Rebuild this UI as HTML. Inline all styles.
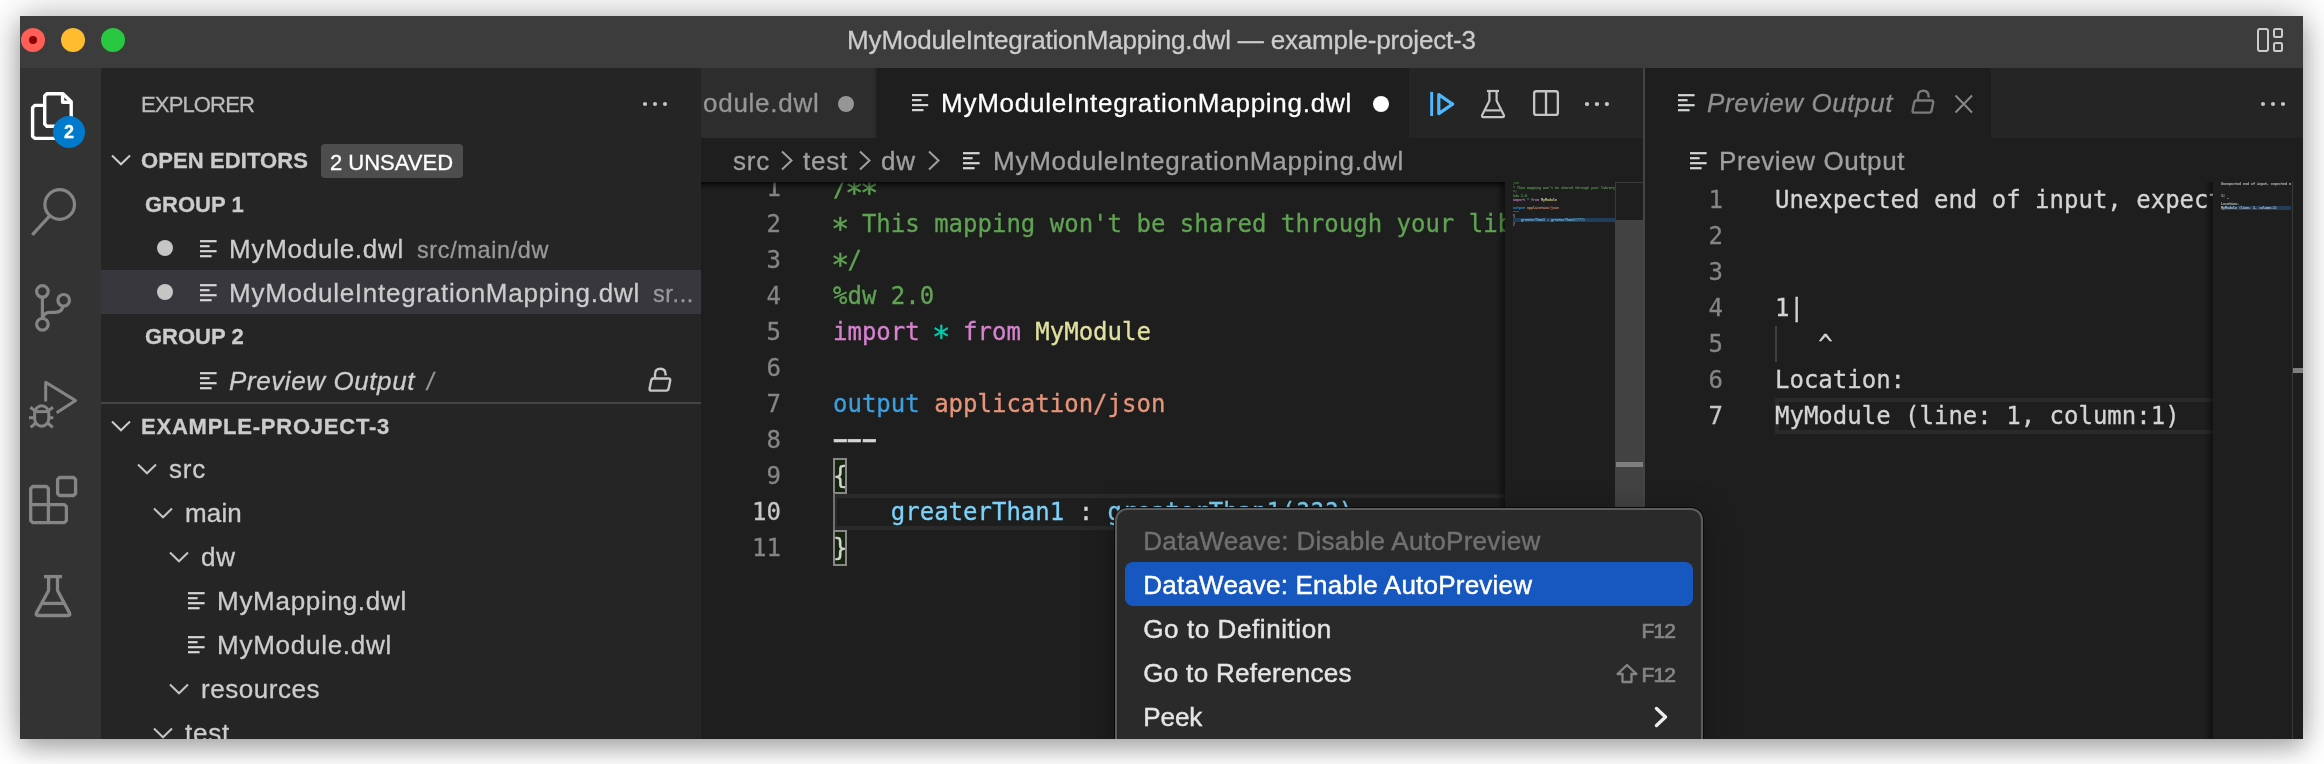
<!DOCTYPE html>
<html><head><meta charset="utf-8"><title>MyModuleIntegrationMapping.dwl — example-project-3</title>
<style>
html,body{margin:0;padding:0;background:#fff;}
body{width:2324px;height:764px;position:relative;overflow:hidden;font-family:"Liberation Sans",sans-serif;font-size:26px;color:#ccc;-webkit-text-stroke:0.3px;}
#shadow{position:absolute;left:20px;top:16px;width:2283px;height:723px;background:#222;box-shadow:0 0 36px rgba(0,0,0,.3),0 10px 20px rgba(0,0,0,.2);}
#w{will-change:transform;position:absolute;left:0;top:0;width:2324px;height:764px;clip-path:inset(16px 21px 25px 20px);}
#w div,#w span,#w svg{position:absolute;white-space:pre;}
.r{height:44px;line-height:44px;}
.b{font-weight:700;font-size:22px;}
.mono{font-family:"DejaVu Sans Mono","Liberation Mono",monospace;font-size:24px;}
.ln{height:36px;line-height:36px;}
.num{text-align:right;color:#858585;}
svg{overflow:visible;}
#w .mi{-webkit-text-stroke:0.45px currentColor;}
#w .da{position:relative;display:inline-block;transform:translateY(-1.5px) scale(2.05,1.45);}
#w .as{position:relative;display:inline-block;transform:translateY(4.5px) scale(1.28);}
</style></head><body>
<div id="shadow"></div>
<div id="w">
<!--TITLEBAR-->
<div style="left:20px;top:16px;width:2283px;height:52px;background:#3c3c3c"></div>
<div style="left:21px;top:28px;width:24px;height:24px;border-radius:50%;background:#ff5f57"></div>
<div style="left:29px;top:36px;width:8px;height:8px;border-radius:50%;background:#8c0000"></div>
<div style="left:61px;top:28px;width:24px;height:24px;border-radius:50%;background:#febc2e"></div>
<div style="left:101px;top:28px;width:24px;height:24px;border-radius:50%;background:#28c840"></div>
<div id="title" style="left:20px;top:16px;width:2283px;height:52px;line-height:49px;text-align:center;color:#ccc;letter-spacing:-0.17px">MyModuleIntegrationMapping.dwl — example-project-3</div>
<svg style="left:2256px;top:27px" width="28" height="26" viewBox="0 0 28 26" fill="none" stroke="#ccc" stroke-width="2"><rect x="2" y="2" width="10" height="22" rx="2"/><rect x="18" y="2" width="8" height="8" rx="1.5"/><rect x="18" y="16" width="8" height="8" rx="1.5"/></svg>
<!--ACTIVITY-->
<div style="left:20px;top:68px;width:81px;height:671px;background:#333"></div>
<svg style="left:20px;top:68px" width="81" height="671" viewBox="20 68 81 671" fill="none" stroke="#858585" stroke-width="3" stroke-linejoin="round" stroke-linecap="butt">
<g stroke="#fff" stroke-width="3.4">
<path d="M44.7 105.4 H34.8 L32.6 107.6 V136.2 L34.8 138.4 H56"/>
<path d="M46.9 93.8 H63 L71.2 101.8 V124.2 L69 126.3 H46.9 L44.7 124.1 V96 Z"/>
<path d="M62.6 94 V102.3 H71"/>
</g>
<circle cx="59.7" cy="204.5" r="14.8" stroke-width="3.2"/><path d="M49.7 215.8 L32.3 234.8" stroke-width="3.2"/>
<g stroke-width="3.2">
<circle cx="42.4" cy="291.4" r="5.8"/><circle cx="63.7" cy="300.3" r="5.8"/><circle cx="42.4" cy="324.3" r="5.8"/>
<path d="M42.4 297.2 V318.5"/><path d="M62.8 306 Q62.2 312.3 55 312.3 H50 Q43.6 312.3 42.6 318.5"/>
</g>
<g stroke-width="3">
<path d="M45.7 401.5 V382.3 L75.6 400.6 L56.6 412.8"/>
<rect x="34.6" y="405.8" width="14.2" height="20.4" rx="7.1" ry="7.6"/>
<path d="M34.6 411.6 H48.8"/>
<path d="M35.2 411 L30.4 407.3 M48.2 411 L53 407.3 M34.6 417.8 H29 M48.8 417.8 H53.3 M35.8 423 L30.6 427.4 M47.6 423 L52.8 427.4"/>
</g>
<g stroke-width="3.3">
<path d="M48.4 504.6 V488.5 L46.4 486.5 H32.7 L30.7 488.5 V520.6 L32.7 522.6 H64.4 L66.4 520.6 V506.6 L64.4 504.6 Z"/>
<path d="M30.7 504.6 H48.4 V522.6"/>
<path d="M59.6 477.5 H73.6 L75.6 479.5 V493.5 L73.6 495.5 H59.6 L57.6 493.5 V479.5 Z"/>
</g>
<g stroke-width="3.3">
<path d="M44 576.6 H62"/>
<path d="M48.6 577 V590.5 L36.5 612.9 Q35.3 615.5 38.1 615.5 H67.9 Q70.7 615.5 69.5 612.9 L57.5 590.5 V577"/>
<path d="M42 603.4 H64"/>
</g>
</svg>
<div style="left:53px;top:116px;width:32px;height:32px;border-radius:50%;background:#007acc"></div>
<div style="left:53px;top:116px;width:32px;height:32px;line-height:33px;text-align:center;color:#fff;font-size:18px;font-weight:700">2</div>
<!--SIDEBAR-->
<div style="left:101px;top:68px;width:600px;height:671px;background:#252526"></div>
<div class="r" style="left:141px;top:83px;font-size:22px;color:#bbb;letter-spacing:-0.85px">EXPLORER</div>
<svg style="left:641px;top:100px" width="28" height="8" viewBox="0 0 28 8" fill="#c5c5c5"><circle cx="4" cy="4" r="2.1"/><circle cx="14" cy="4" r="2.1"/><circle cx="24" cy="4" r="2.1"/></svg>
<svg style="left:111px;top:154px" width="20" height="12" viewBox="0 0 20 12" fill="none" stroke="#ccc" stroke-width="2"><path d="M1 1.5 L10 10.3 L19 1.5"/></svg>
<div class="r b" style="left:141px;top:139px;color:#ccc;letter-spacing:0.1px">OPEN EDITORS</div>
<div style="left:321px;top:144px;width:142px;height:34px;border-radius:4px;background:#4d4d4d"></div>
<div style="left:330px;top:144px;height:36px;line-height:37px;font-size:22px;color:#fff">2 UNSAVED</div>
<div class="r b" style="left:145px;top:183px;color:#ccc">GROUP 1</div>
<div style="left:157px;top:240px;width:16px;height:16px;border-radius:50%;background:#c5c5c5"></div>
<svg style="left:200px;top:240px" width="18" height="18" viewBox="0 0 18 18" fill="#d4d7d6"><rect x="0" y="0.1" width="16.6" height="2.2"/><rect x="0" y="5.1" width="9.6" height="2.2"/><rect x="0" y="10.1" width="16.6" height="2.2"/><rect x="0" y="15.1" width="11.6" height="2.2"/></svg>
<div class="r" style="left:229px;top:227px;letter-spacing:0.74px">MyModule.dwl</div>
<div class="r" style="left:417px;top:228px;font-size:23.4px;color:#999;letter-spacing:0.66px">src/main/dw</div>
<div style="left:101px;top:270px;width:600px;height:44px;background:#37373d"></div>
<div style="left:157px;top:284px;width:16px;height:16px;border-radius:50%;background:#c5c5c5"></div>
<svg style="left:200px;top:284px" width="18" height="18" viewBox="0 0 18 18" fill="#d4d7d6"><rect x="0" y="0.1" width="16.6" height="2.2"/><rect x="0" y="5.1" width="9.6" height="2.2"/><rect x="0" y="10.1" width="16.6" height="2.2"/><rect x="0" y="15.1" width="11.6" height="2.2"/></svg>
<div class="r" style="left:229px;top:271px;letter-spacing:0.74px">MyModuleIntegrationMapping.dwl</div>
<div class="r" style="left:653px;top:272px;font-size:23.4px;color:#999;letter-spacing:0.66px">sr...</div>
<div class="r b" style="left:145px;top:315px;color:#ccc">GROUP 2</div>
<svg style="left:200px;top:372px" width="18" height="18" viewBox="0 0 18 18" fill="#d4d7d6"><rect x="0" y="0.1" width="16.6" height="2.2"/><rect x="0" y="5.1" width="9.6" height="2.2"/><rect x="0" y="10.1" width="16.6" height="2.2"/><rect x="0" y="15.1" width="11.6" height="2.2"/></svg>
<div class="r" style="left:229px;top:359px;font-style:italic;letter-spacing:0.59px">Preview Output</div>
<div class="r" style="left:427px;top:360px;font-size:23.4px;color:#999;font-style:italic">/</div>
<svg style="left:648px;top:367px" width="24" height="26" viewBox="0 0 24 26" fill="none" stroke="#c5c5c5" stroke-width="2.4" stroke-linejoin="round"><path d="M3.6 11.5 H20.4 Q22.6 11.5 22.2 13.6 L20.6 21.6 Q20.2 23.6 18.2 23.6 H3.4 Q1.2 23.6 1.6 21.6 L3.2 13.6 Q3.6 11.5 5.6 11.5"/><path d="M7 11.5 V7.5 Q7 1.8 12.4 1.8 Q17.6 1.8 17.6 7.5 V8.6"/></svg>
<div style="left:101px;top:402px;width:600px;height:2px;background:#454546"></div>
<svg style="left:111px;top:420px" width="20" height="12" viewBox="0 0 20 12" fill="none" stroke="#ccc" stroke-width="2"><path d="M1 1.5 L10 10.3 L19 1.5"/></svg>
<div class="r b" style="left:141px;top:404.5px;color:#ccc;letter-spacing:0.77px">EXAMPLE-PROJECT-3</div>
<svg style="left:136.5px;top:463px" width="20" height="12" viewBox="0 0 20 12" fill="none" stroke="#c5c5c5" stroke-width="2"><path d="M1 1.5 L10 10.3 L19 1.5"/></svg>
<div class="r" style="left:169px;top:447px;letter-spacing:0.78px">src</div>
<svg style="left:152.5px;top:507px" width="20" height="12" viewBox="0 0 20 12" fill="none" stroke="#c5c5c5" stroke-width="2"><path d="M1 1.5 L10 10.3 L19 1.5"/></svg>
<div class="r" style="left:185px;top:491px;letter-spacing:0.16px">main</div>
<svg style="left:168.5px;top:551px" width="20" height="12" viewBox="0 0 20 12" fill="none" stroke="#c5c5c5" stroke-width="2"><path d="M1 1.5 L10 10.3 L19 1.5"/></svg>
<div class="r" style="left:201px;top:535px;letter-spacing:0.7px">dw</div>
<svg style="left:188px;top:592px" width="18" height="18" viewBox="0 0 18 18" fill="#d4d7d6"><rect x="0" y="0.1" width="16.6" height="2.2"/><rect x="0" y="5.1" width="9.6" height="2.2"/><rect x="0" y="10.1" width="16.6" height="2.2"/><rect x="0" y="15.1" width="11.6" height="2.2"/></svg>
<div class="r" style="left:217px;top:579px;letter-spacing:0.72px">MyMapping.dwl</div>
<svg style="left:188px;top:636px" width="18" height="18" viewBox="0 0 18 18" fill="#d4d7d6"><rect x="0" y="0.1" width="16.6" height="2.2"/><rect x="0" y="5.1" width="9.6" height="2.2"/><rect x="0" y="10.1" width="16.6" height="2.2"/><rect x="0" y="15.1" width="11.6" height="2.2"/></svg>
<div class="r" style="left:217px;top:623px;letter-spacing:0.74px">MyModule.dwl</div>
<svg style="left:168.5px;top:683px" width="20" height="12" viewBox="0 0 20 12" fill="none" stroke="#c5c5c5" stroke-width="2"><path d="M1 1.5 L10 10.3 L19 1.5"/></svg>
<div class="r" style="left:201px;top:667px;letter-spacing:0.54px">resources</div>
<svg style="left:152.5px;top:727px" width="20" height="12" viewBox="0 0 20 12" fill="none" stroke="#c5c5c5" stroke-width="2"><path d="M1 1.5 L10 10.3 L19 1.5"/></svg>
<div class="r" style="left:185px;top:711px;letter-spacing:0.77px">test</div>
<!--GROUP1-->
<div style="left:701px;top:68px;width:942px;height:70px;background:#252526"></div>
<div style="left:701px;top:68px;width:174px;height:70px;background:#2d2d2d"></div>
<div style="left:703px;top:69px;height:70px;line-height:69px;color:#969696;letter-spacing:0.74px">odule.dwl</div>
<div style="left:838px;top:96px;width:16px;height:16px;border-radius:50%;background:#969696"></div>
<div style="left:877px;top:68px;width:532px;height:70px;background:#1e1e1e"></div>
<svg style="left:912px;top:93.6px" width="18" height="18" viewBox="0 0 18 18" fill="#d4d4d4"><rect x="0" y="0" width="16.2" height="2.2"/><rect x="0" y="5" width="9.5" height="2.2"/><rect x="0" y="10" width="16.2" height="2.2"/><rect x="0" y="15" width="11.5" height="2.2"/></svg>
<div style="left:941px;top:69px;height:70px;line-height:69px;color:#fff;letter-spacing:0.74px">MyModuleIntegrationMapping.dwl</div>
<div style="left:1372.7px;top:96px;width:16px;height:16px;border-radius:50%;background:#fff"></div>
<svg style="left:1428px;top:90px" width="28" height="28" viewBox="0 0 28 28" fill="none" stroke="#4fb8ff" stroke-linejoin="round"><path d="M3.65 1.9 V26" stroke-width="2.9"/><path d="M10.8 4.6 L24.6 14.1 L10.8 23.6 Z" stroke-width="3.2"/></svg>
<svg style="left:1480px;top:89px" width="26" height="30" viewBox="0 0 26 30" fill="none" stroke="#c5c5c5" stroke-width="2.2" stroke-linejoin="round"><path d="M7 2 H19"/><path d="M9.4 2 V11.8 L2.2 25.9 Q1.4 28.1 3.6 28.1 H22.4 Q24.6 28.1 23.8 25.9 L16.6 11.8 V2"/><path d="M5.4 21.4 H20.6"/></svg>
<svg style="left:1532px;top:90px" width="28" height="28" viewBox="0 0 28 28" fill="none" stroke="#c5c5c5" stroke-width="2.3"><rect x="2.15" y="1.25" width="23.7" height="23.7" rx="2.2"/><path d="M14 1.25 V24.95"/></svg>
<svg style="left:1583px;top:100px" width="28" height="8" viewBox="0 0 28 8" fill="#c5c5c5"><circle cx="4" cy="4.1" r="2.15"/><circle cx="13.95" cy="4.1" r="2.15"/><circle cx="23.9" cy="4.1" r="2.15"/></svg>
<div style="left:701px;top:138px;width:942px;height:44px;background:#1e1e1e"></div>
<div class="r" style="left:733px;top:139px;color:#a0a0a0;letter-spacing:0.78px">src</div>
<div class="r" style="left:803px;top:139px;color:#a0a0a0;letter-spacing:0.77px">test</div>
<div class="r" style="left:881px;top:139px;color:#a0a0a0;letter-spacing:0.7px">dw</div>
<svg style="left:780px;top:151px" width="14" height="20" viewBox="0 0 14 20" fill="none" stroke="#a0a0a0" stroke-width="2"><path d="M2 0.5 L11.5 9.5 L2 18.5"/></svg>
<svg style="left:858px;top:151px" width="14" height="20" viewBox="0 0 14 20" fill="none" stroke="#a0a0a0" stroke-width="2"><path d="M2 0.5 L11.5 9.5 L2 18.5"/></svg>
<svg style="left:927px;top:151px" width="14" height="20" viewBox="0 0 14 20" fill="none" stroke="#a0a0a0" stroke-width="2"><path d="M2 0.5 L11.5 9.5 L2 18.5"/></svg>
<svg style="left:963px;top:152px" width="18" height="18" viewBox="0 0 18 18" fill="#d4d7d6"><rect x="0" y="0.1" width="16.6" height="2.2"/><rect x="0" y="5.1" width="9.6" height="2.2"/><rect x="0" y="10.1" width="16.6" height="2.2"/><rect x="0" y="15.1" width="11.6" height="2.2"/></svg>
<div class="r" style="left:993px;top:139px;color:#a0a0a0;letter-spacing:0.74px">MyModuleIntegrationMapping.dwl</div>
<div id="ed1" style="left:701px;top:182px;width:942px;height:557px;background:#1e1e1e;overflow:hidden"></div>
<!--CODE1-->
<div style="left:701px;top:182px;width:804px;height:557px;overflow:hidden">
<div style="left:132px;top:312px;width:680px;height:36px;border:4px solid #2a2a2a;box-sizing:border-box"></div>
<div style="left:132px;top:276px;width:14px;height:35.5px;border:2px solid #888;background:#16240f;box-sizing:border-box"></div>
<div style="left:132px;top:348px;width:14px;height:35.5px;border:2px solid #888;background:#16240f;box-sizing:border-box"></div>
<div style="left:132px;top:311px;width:2px;height:37px;background:#707070"></div>
<div class="mono ln num" style="left:0;width:80px;top:-12px;color:#858585">1</div><div class="mono ln" style="left:132px;top:-12px"><span style="position:static;color:#5fa353">/<span class="as">*</span><span class="as">*</span></span></div>
<div class="mono ln num" style="left:0;width:80px;top:24px;color:#858585">2</div><div class="mono ln" style="left:132px;top:24px"><span style="position:static;color:#5fa353"><span class="as">*</span> This mapping won't be shared through your library</span></div>
<div class="mono ln num" style="left:0;width:80px;top:60px;color:#858585">3</div><div class="mono ln" style="left:132px;top:60px"><span style="position:static;color:#5fa353"><span class="as">*</span>/</span></div>
<div class="mono ln num" style="left:0;width:80px;top:96px;color:#858585">4</div><div class="mono ln" style="left:132px;top:96px"><span style="position:static;color:#5fa353">%dw 2.0</span></div>
<div class="mono ln num" style="left:0;width:80px;top:132px;color:#858585">5</div><div class="mono ln" style="left:132px;top:132px"><span style="position:static;color:#d682ce">import</span><span style="position:static;color:#d4d4d4"> </span><span style="position:static;color:#00d0b0"><span class="as">*</span></span><span style="position:static;color:#d4d4d4"> </span><span style="position:static;color:#d682ce">from</span><span style="position:static;color:#d4d4d4"> </span><span style="position:static;color:#e1e1a0">MyModule</span></div>
<div class="mono ln num" style="left:0;width:80px;top:168px;color:#858585">6</div>
<div class="mono ln num" style="left:0;width:80px;top:204px;color:#858585">7</div><div class="mono ln" style="left:132px;top:204px"><span style="position:static;color:#3c9fe0">output</span><span style="position:static;color:#d4d4d4"> </span><span style="position:static;color:#e6957a">application/json</span></div>
<div class="mono ln num" style="left:0;width:80px;top:240px;color:#858585">8</div><div class="mono ln" style="left:132px;top:240px"><span style="position:static;color:#d4d4d4"><span class="da">-</span><span class="da">-</span><span class="da">-</span></span></div>
<div class="mono ln num" style="left:0;width:80px;top:276px;color:#858585">9</div><div class="mono ln" style="left:132px;top:276px"><span style="position:static;color:#d4d4d4">{</span></div>
<div class="mono ln num" style="left:0;width:80px;top:312px;color:#c6c6c6">10</div><div class="mono ln" style="left:132px;top:312px"><span style="position:static;color:#d4d4d4">    </span><span style="position:static;color:#7cd3fa">greaterThan1</span><span style="position:static;color:#d4d4d4"> : </span><span style="position:static;color:#7cd3fa">greaterThan1(???)</span></div>
<div class="mono ln num" style="left:0;width:80px;top:348px;color:#858585">11</div><div class="mono ln" style="left:132px;top:348px"><span style="position:static;color:#d4d4d4">}</span></div>
</div>
<div style="left:701px;top:182px;width:942px;height:8px;background:linear-gradient(#000 0,rgba(0,0,0,.55) 25%,rgba(0,0,0,0) 100%);opacity:.8"></div>
<div style="left:1505px;top:182px;width:110px;height:557px;background:#1e1e1e"></div>
<div style="left:1497px;top:182px;width:8px;height:557px;background:linear-gradient(90deg,rgba(0,0,0,0),rgba(0,0,0,.45))"></div>
<div style="left:1505px;top:182px;width:110px;height:60px;overflow:hidden">
<div style="left:8px;top:36px;width:102px;height:4px;background:#223d59"></div>
<div class="mono" style="left:8px;top:0;line-height:28.9px;transform:scale(0.1384);transform-origin:0 0;opacity:.8;font-weight:700"><span style="position:static;color:#5fa353">/**</span>
<span style="position:static;color:#5fa353">* This mapping won't be shared through your library</span>
<span style="position:static;color:#5fa353">*/</span>
<span style="position:static;color:#5fa353">%dw 2.0</span>
<span style="position:static;color:#d682ce">import</span><span style="position:static;color:#d4d4d4"> </span><span style="position:static;color:#00d0b0">*</span><span style="position:static;color:#d4d4d4"> </span><span style="position:static;color:#d682ce">from</span><span style="position:static;color:#d4d4d4"> </span><span style="position:static;color:#e1e1a0">MyModule</span>

<span style="position:static;color:#3c9fe0">output</span><span style="position:static;color:#d4d4d4"> </span><span style="position:static;color:#e6957a">application/json</span>
<span style="position:static;color:#d4d4d4">---</span>
<span style="position:static;color:#d4d4d4">{</span>
<span style="position:static;color:#d4d4d4">    </span><span style="position:static;color:#7cd3fa">greaterThan1</span><span style="position:static;color:#d4d4d4"> : </span><span style="position:static;color:#7cd3fa">greaterThan1(???)</span>
<span style="position:static;color:#d4d4d4">}</span>
</div>
</div>
<div style="left:1615px;top:182px;width:28px;height:557px;background:#1e1e1e;border-left:1.5px solid #3a3a3a;border-top:1.5px solid #3a3a3a;box-sizing:border-box"></div>
<div style="left:1615px;top:220px;width:28px;height:519px;background:#424242"></div>
<div style="left:1616px;top:462px;width:27px;height:5px;background:#7f7f7f"></div>
<div style="left:1643px;top:68px;width:2px;height:671px;background:#444"></div>
<!--GROUP2-->
<div style="left:1645px;top:68px;width:658px;height:70px;background:#252526"></div>
<div style="left:1645px;top:68px;width:346px;height:70px;background:#1e1e1e"></div>
<svg style="left:1678px;top:94px" width="18" height="18" viewBox="0 0 18 18" fill="#d4d7d6"><rect x="0" y="0.1" width="16.6" height="2.2"/><rect x="0" y="5.1" width="9.6" height="2.2"/><rect x="0" y="10.1" width="16.6" height="2.2"/><rect x="0" y="15.1" width="11.6" height="2.2"/></svg>
<div style="left:1707px;top:69px;height:70px;line-height:69px;color:#8f8f8f;font-style:italic;letter-spacing:0.59px">Preview Output</div>
<svg style="left:1910.5px;top:89px" width="24" height="26" viewBox="0 0 24 26" fill="none" stroke="#7a7a7a" stroke-width="2.4" stroke-linejoin="round"><path d="M3.6 11.5 H20.4 Q22.6 11.5 22.2 13.6 L20.6 21.6 Q20.2 23.6 18.2 23.6 H3.4 Q1.2 23.6 1.6 21.6 L3.2 13.6 Q3.6 11.5 5.6 11.5"/><path d="M7 11.5 V7.5 Q7 1.8 12.4 1.8 Q17.6 1.8 17.6 7.5 V8.6"/></svg>
<svg style="left:1954px;top:94px" width="20" height="20" viewBox="0 0 20 20" fill="none" stroke="#8a8a8a" stroke-width="2"><path d="M1.5 1.5 L18 18.5 M18 1.5 L1.5 18.5"/></svg>
<svg style="left:2259px;top:100px" width="28" height="8" viewBox="0 0 28 8" fill="#c5c5c5"><circle cx="4" cy="4" r="2.1"/><circle cx="14" cy="4" r="2.1"/><circle cx="24" cy="4" r="2.1"/></svg>
<div style="left:1645px;top:138px;width:658px;height:601px;background:#1e1e1e"></div>
<svg style="left:1690px;top:152px" width="18" height="18" viewBox="0 0 18 18" fill="#d4d7d6"><rect x="0" y="0.1" width="16.6" height="2.2"/><rect x="0" y="5.1" width="9.6" height="2.2"/><rect x="0" y="10.1" width="16.6" height="2.2"/><rect x="0" y="15.1" width="11.6" height="2.2"/></svg>
<div class="r" style="left:1719px;top:139px;color:#a0a0a0;letter-spacing:0.59px">Preview Output</div>
<div style="left:1645px;top:182px;width:568px;height:557px;overflow:hidden">
<div style="left:130px;top:216px;width:460px;height:36px;border:4px solid #2a2a2a;box-sizing:border-box"></div>
<div style="left:130px;top:144px;width:2px;height:36px;background:#404040"></div>
<div class="mono ln num" style="left:0;width:78px;top:0px;color:#858585">1</div><div class="mono ln" style="left:130px;top:0px;color:#d4d4d4">Unexpected end of input, expected a value</div>
<div class="mono ln num" style="left:0;width:78px;top:36px;color:#858585">2</div>
<div class="mono ln num" style="left:0;width:78px;top:72px;color:#858585">3</div>
<div class="mono ln num" style="left:0;width:78px;top:108px;color:#858585">4</div><div class="mono ln" style="left:130px;top:108px;color:#d4d4d4">1|</div>
<div class="mono ln num" style="left:0;width:78px;top:144px;color:#858585">5</div><div class="mono ln" style="left:130px;top:144px;color:#d4d4d4">   ^</div>
<div class="mono ln num" style="left:0;width:78px;top:180px;color:#858585">6</div><div class="mono ln" style="left:130px;top:180px;color:#d4d4d4">Location:</div>
<div class="mono ln num" style="left:0;width:78px;top:216px;color:#c6c6c6">7</div><div class="mono ln" style="left:130px;top:216px;color:#d4d4d4">MyModule (line: 1, column:1)</div>
</div>
<div style="left:2213px;top:182px;width:79px;height:557px;background:#1e1e1e"></div>
<div style="left:2205px;top:182px;width:8px;height:557px;background:linear-gradient(90deg,rgba(0,0,0,0),rgba(0,0,0,.45))"></div>
<div style="left:2213px;top:182px;width:78px;height:60px;overflow:hidden">
<div style="left:8px;top:24px;width:70px;height:4px;background:#223d59"></div>
<div class="mono" style="left:8px;top:0;line-height:28.9px;transform:scale(0.1384);transform-origin:0 0;opacity:.8;font-weight:700"><span style="position:static;color:#d4d4d4">Unexpected end of input, expected a value</span>


<span style="position:static;color:#d4d4d4">1|</span>
<span style="position:static;color:#d4d4d4">   ^</span>
<span style="position:static;color:#d4d4d4">Location:</span>
<span style="position:static;color:#d4d4d4">MyModule (line: 1, column:1)</span>
</div>
</div>
<div style="left:2292px;top:182px;width:11px;height:557px;background:#1e1e1e;border-left:1.5px solid #3a3a3a;box-sizing:border-box"></div>
<div style="left:2293px;top:368px;width:10px;height:5px;background:#7f7f7f"></div>
<!--MENU-->
<div style="left:1114px;top:507px;width:590px;height:300px;border-radius:13px;background:#0a0a0a;box-shadow:0 8px 30px rgba(0,0,0,.35)"></div>
<div style="left:1115px;top:508px;width:588px;height:300px;border-radius:12px;background:#5c5c5c"></div>
<div style="left:1117px;top:510px;width:584px;height:300px;border-radius:10.5px;background:#2a2a2a"></div>
<div style="left:1125px;top:562px;width:568px;height:44px;border-radius:8px;background:#1757c0"></div>
<div class="r mi" style="left:1143.3px;top:519px;color:#707070;letter-spacing:0.30px">DataWeave: Disable AutoPreview</div>
<div class="r mi" style="left:1143.3px;top:563px;color:#fff;letter-spacing:0.22px">DataWeave: Enable AutoPreview</div>
<div class="r mi" style="left:1143.3px;top:607px;color:#e4e4e4;letter-spacing:0.58px">Go to Definition</div>
<div class="r mi" style="left:1143.3px;top:651px;color:#e4e4e4;letter-spacing:0.30px">Go to References</div>
<div class="r mi" style="left:1143.3px;top:695px;color:#e4e4e4;letter-spacing:-0.10px">Peek</div>
<div class="r" style="left:1574px;width:101px;text-align:right;top:609px;color:#858585;font-size:21px;letter-spacing:-0.9px;-webkit-text-stroke:0.7px">F12</div>
<div class="r" style="left:1574px;width:101px;text-align:right;top:653px;color:#858585;font-size:21px;letter-spacing:-0.9px;-webkit-text-stroke:0.7px">F12</div>
<svg style="left:1616px;top:662.5px" width="24" height="22" viewBox="0 0 24 22" fill="none" stroke="#858585" stroke-width="2.3" stroke-linejoin="round"><path d="M11 2 L20.5 11 H15.5 V19 H6.5 V11 H1.5 Z"/></svg>
<svg style="left:1653.5px;top:706px" width="14" height="22" viewBox="0 0 14 22" fill="none" stroke="#ededed" stroke-width="3.3" stroke-linecap="round" stroke-linejoin="round"><path d="M2.5 2.5 L11.5 11 L2.5 19.5"/></svg>
</div>
</body></html>
